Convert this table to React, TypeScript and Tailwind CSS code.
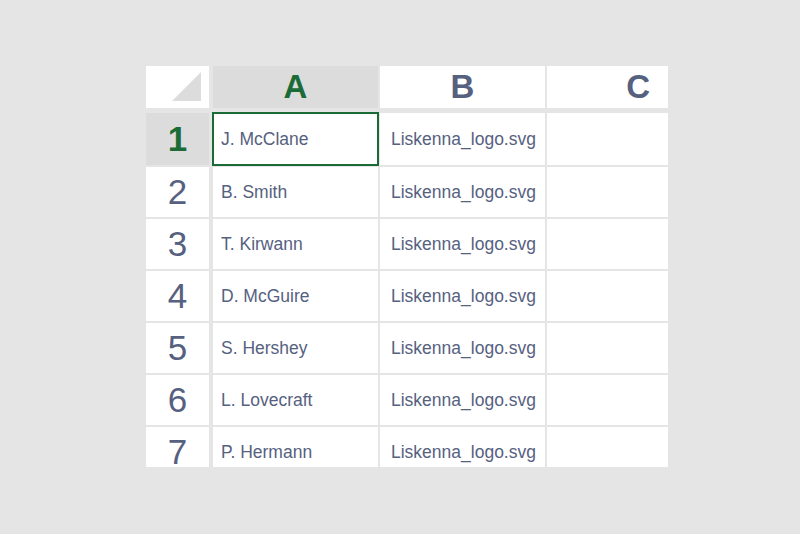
const names = ["J. McClane", "B. Smith", "T. Kirwann", "D. McGuire", "S. Hershey", "L. Lovecraft", "P. Hermann"];

const font = { fontFamily: '"Liberation Sans", Arial, sans-serif' };

export default function App() {
  return (
    <div className="min-h-screen w-full bg-[#e5e5e5] pt-[66px]" style={font}>
      <div className="mx-auto ml-[146px] h-[401px] w-[522px] overflow-hidden">
        {/* header row */}
        <div className="flex h-[42px] gap-[2px]">
          <div className="mr-[2px] h-full w-[63px] bg-white">
            <svg width="63" height="42" viewBox="0 0 63 42">
              <polygon points="26,35 55,35 55,6" fill="#dcdcdc" />
            </svg>
          </div>
          <div className="flex w-[165px] items-center justify-center bg-[#dcdcdc] text-[33px] font-bold text-[#1b6b37]">
            A
          </div>
          <div className="flex w-[165px] items-center justify-center bg-white text-[33px] font-bold text-[#56617f]">
            B
          </div>
          <div className="flex w-[121px] items-center justify-end bg-white pr-[18px] text-[33px] font-bold text-[#56617f]">
            C
          </div>
        </div>

        {/* body rows */}
        <div className="mt-[5px] flex flex-col gap-[2px]">
          {names.map((name, i) => {
            const selected = i === 0;
            return (
              <div key={name} className={`flex gap-[2px] ${selected ? "h-[52px]" : "h-[50px]"}`}>
                <div
                  className={`mr-[2px] flex w-[63px] shrink-0 items-center justify-center text-[35px] ${
                    selected ? "bg-[#dcdcdc] font-bold text-[#1b6b37]" : "bg-white text-[#56617f]"
                  }`}
                >
                  {i + 1}
                </div>
                <div className="relative flex w-[165px] shrink-0 items-center bg-white pl-[8px] text-[17.5px] text-[#56617f]">
                  {name}
                  {selected && (
                    <div className="absolute -inset-[1px] border-2 border-[#1b6b37]" />
                  )}
                </div>
                <div className="flex w-[165px] shrink-0 items-center bg-white pl-[11px] text-[17.5px] text-[#56617f]">
                  Liskenna_logo.svg
                </div>
                <div className="w-[121px] shrink-0 bg-white" />
              </div>
            );
          })}
        </div>
      </div>
    </div>
  );
}
